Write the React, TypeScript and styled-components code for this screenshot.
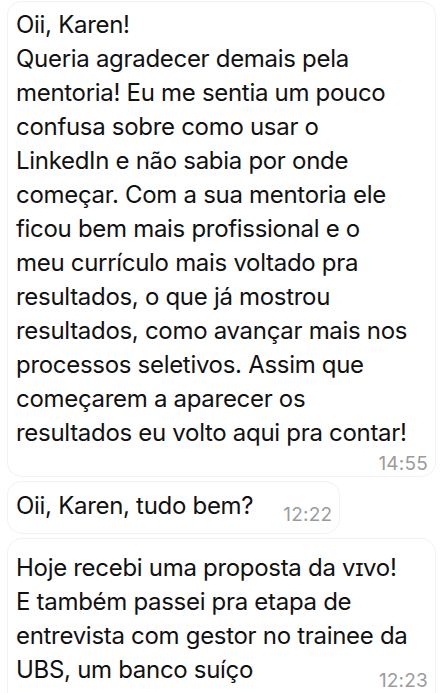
import React from 'react'
import styled, { createGlobalStyle } from 'styled-components'

const GlobalStyle = createGlobalStyle`
  html, body {
    margin: 0;
    padding: 0;
    background: #ffffff;
  }
  body {
    font-family: Inter, "Noto Sans", sans-serif;
    -webkit-font-smoothing: antialiased;
  }
`

const Chat = styled.main`
  display: flex;
  flex-direction: column;
  gap: 6px;
  padding: 2px 6px 0 8px;
  width: 441px;
  height: 693px;
  box-sizing: border-box;
  overflow: hidden;
`

const Bubble = styled.section<{ $compact?: boolean; $pad: string }>`
  align-self: ${p => (p.$compact ? 'flex-start' : 'stretch')};
  background: #ffffff;
  border-radius: 14px;
  box-shadow: 0 0 0 1px #f2f2f4;
  padding: ${p => p.$pad};
`

const Text = styled.p`
  margin: 0;
  font-size: 24px;
  line-height: 34px;
  color: #111111;
  letter-spacing: -0.3px;
  white-space: nowrap;
`

const SmallCaps = styled.span`
  font-variant: small-caps;
`

const Time = styled.span<{ $inline?: boolean; $float?: boolean }>`
  font-size: 19px;
  line-height: 24px;
  color: #9b9b9d;
  letter-spacing: 0.2px;
  ${p => p.$inline && 'margin-left: 30px; vertical-align: -7px;'}
  ${p => p.$float && 'float: right; position: relative; top: 16px; margin-right: 2px;'}
`

const TimeRow = styled.div`
  text-align: right;
  line-height: 24px;
  margin-top: 2px;
  padding-right: 2px;
`

const firstMessage = [
  'Oii, Karen!',
  'Queria agradecer demais pela',
  'mentoria! Eu me sentia um pouco',
  'confusa sobre como usar o',
  'LinkedIn e não sabia por onde',
  'começar. Com a sua mentoria ele',
  'ficou bem mais profissional e o',
  'meu currículo mais voltado pra',
  'resultados, o que já mostrou',
  'resultados, como avançar mais nos',
  'processos seletivos. Assim que',
  'começarem a aparecer os',
  'resultados eu volto aqui pra contar!',
]

function Lines({ lines }: { lines: string[] }) {
  return (
    <>
      {lines.map((line, i) => (
        <React.Fragment key={i}>
          {i > 0 && <br />}
          {line}
        </React.Fragment>
      ))}
    </>
  )
}

export default function App() {
  return (
    <>
      <GlobalStyle />
      <Chat>
        <Bubble $pad="6px 5px 0 8px">
          <Text>
            <Lines lines={firstMessage} />
          </Text>
          <TimeRow>
            <Time>14:55</Time>
          </TimeRow>
        </Bubble>
        <Bubble $compact $pad="7px 7px 6px 8px">
          <Text>
            Oii, Karen, tudo bem?<Time $inline>12:22</Time>
          </Text>
        </Bubble>
        <Bubble $pad="12px 5px 20px 8px">
          <Text>
            Hoje recebi uma proposta da <SmallCaps>vivo</SmallCaps>!
            <br />
            E também passei pra etapa de
            <br />
            entrevista com gestor no trainee da
            <br />
            UBS, um banco suíço
            <Time $float>12:23</Time>
          </Text>
        </Bubble>
      </Chat>
    </>
  )
}
